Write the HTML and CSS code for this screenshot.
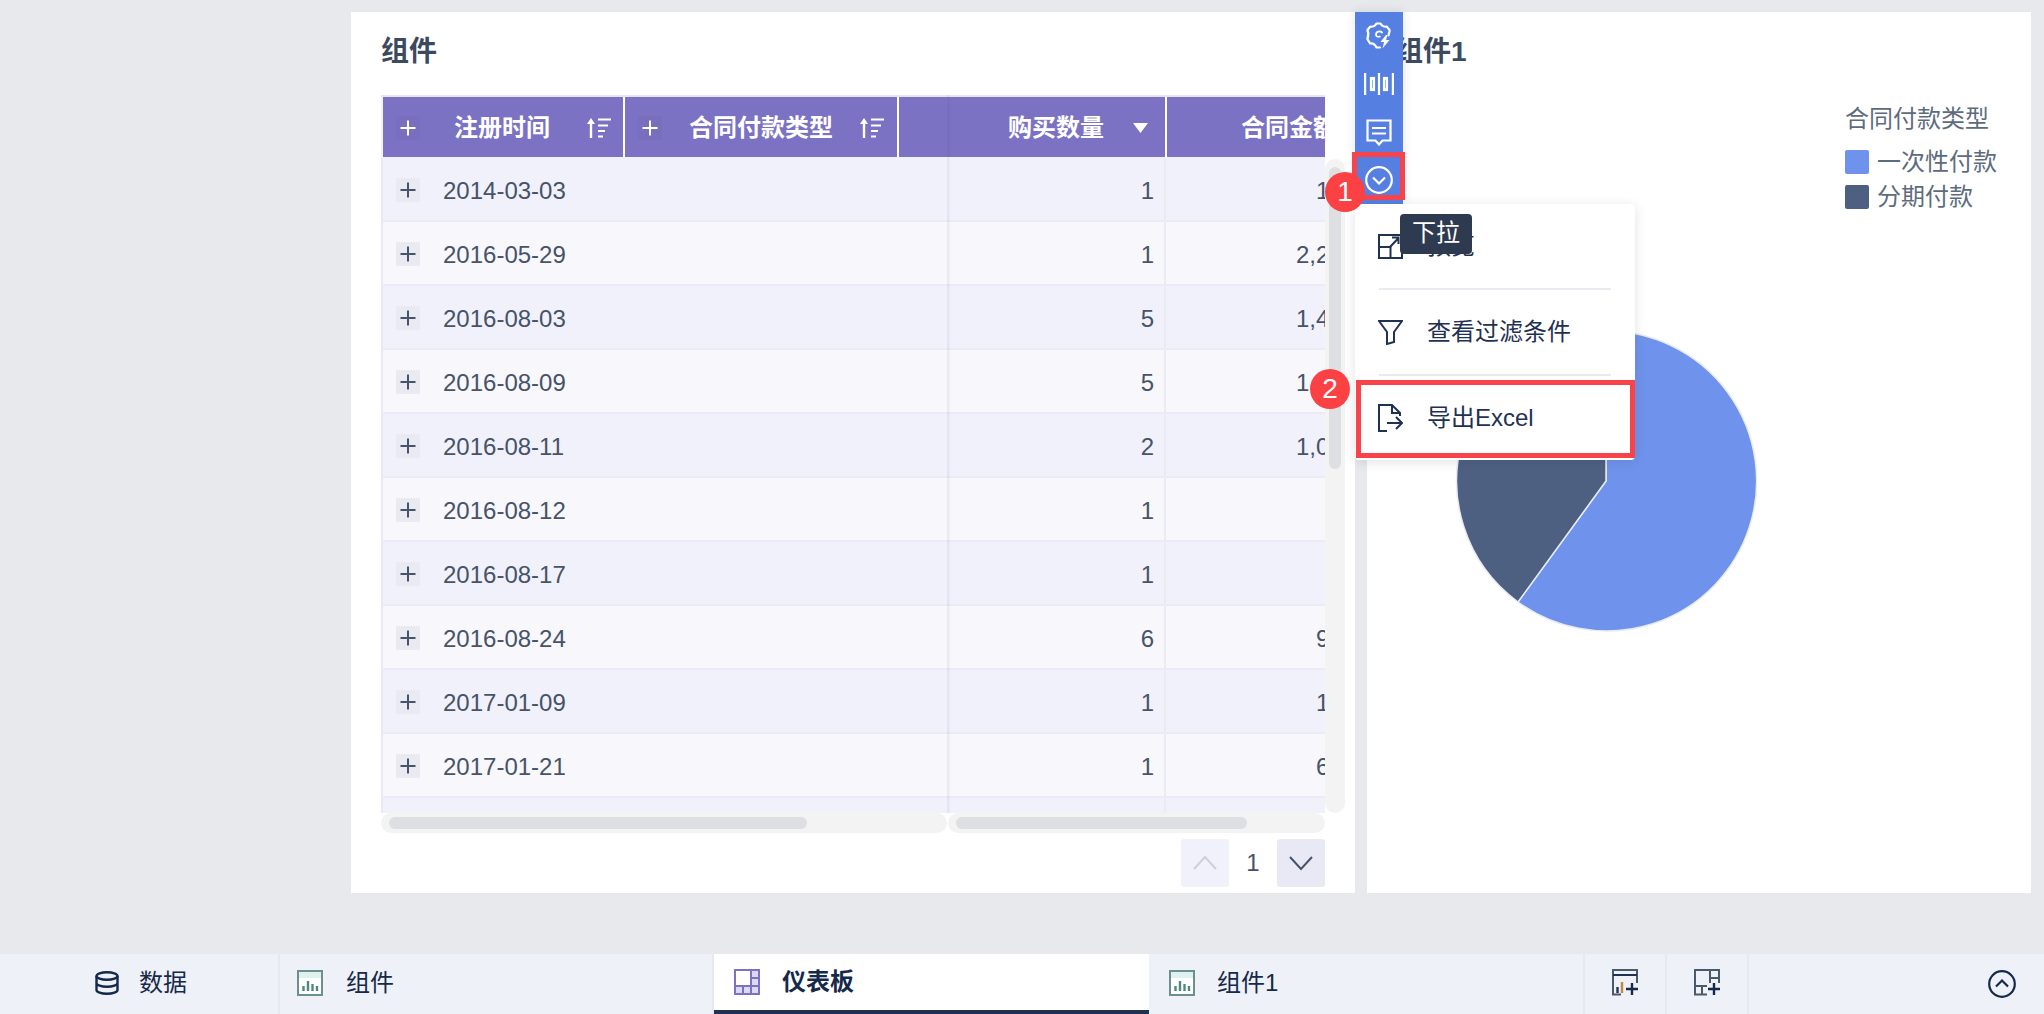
FILE: index.html
```html
<!DOCTYPE html>
<html lang="zh-CN">
<head>
<meta charset="utf-8">
<title>仪表板</title>
<link rel="stylesheet" href="styles.css">
</head>
<body>
<svg class="defs" width="0" height="0" aria-hidden="true">
  <symbol id="plus" viewBox="0 0 24 24"><path d="M12 4.500v15M4.500 12h15" fill="none" stroke="currentColor" stroke-width="2"/></symbol>
  <symbol id="sort" viewBox="0 0 25 20"><path d="M5 20V3" fill="none" stroke="#fff" stroke-width="2.400"/><path d="M5 0l4 6H1z" fill="#fff"/><path d="M12 1.500h13M12 7.500h10M12 13h7M12 18.500h5" fill="none" stroke="#fff" stroke-width="2"/></symbol>
  <symbol id="chart-tab" viewBox="0 0 26 26"><rect x="1" y="1" width="24" height="24" fill="#fff" stroke="#6c9090" stroke-width="2"/><rect x="2" y="2" width="22" height="6" fill="#dff1ee"/><path d="M6.500 21v-5M11 21V11M15.500 21v-7M20 21v-5" fill="none" stroke="#4c8a80" stroke-width="2.400"/></symbol>
</svg>

<main class="stage">
  <section class="card card-table">
    <h2 class="card-title">组件</h2>
    <div class="table-row-wrap">
      <div class="table">
        <div class="thead">
          <div class="th th-dim1"><span class="plus plus-head"><svg><use href="#plus"/></svg></span><span class="th-label">注册时间</span><svg class="sort"><use href="#sort"/></svg></div>
          <div class="th th-dim2"><span class="plus plus-head"><svg><use href="#plus"/></svg></span><span class="th-label">合同付款类型</span><svg class="sort"><use href="#sort"/></svg></div>
          <div class="th th-num3"><span>购买数量</span><svg class="tri" viewBox="0 0 15 10"><path d="M0 0h15L7.500 10z" fill="#fff"/></svg></div>
          <div class="th th-num4"><span>合同金额</span></div>
        </div>
        <div class="tr odd"><div class="td-dim"><span class="plus"><svg><use href="#plus"/></svg></span>2014-03-03</div><div class="td-num3">1</div><div class="td-num4">100</div></div>
        <div class="tr even"><div class="td-dim"><span class="plus"><svg><use href="#plus"/></svg></span>2016-05-29</div><div class="td-num3">1</div><div class="td-num4">2,200</div></div>
        <div class="tr odd"><div class="td-dim"><span class="plus"><svg><use href="#plus"/></svg></span>2016-08-03</div><div class="td-num3">5</div><div class="td-num4">1,400</div></div>
        <div class="tr even"><div class="td-dim"><span class="plus"><svg><use href="#plus"/></svg></span>2016-08-09</div><div class="td-num3">5</div><div class="td-num4">1,100</div></div>
        <div class="tr odd"><div class="td-dim"><span class="plus"><svg><use href="#plus"/></svg></span>2016-08-11</div><div class="td-num3">2</div><div class="td-num4">1,000</div></div>
        <div class="tr even"><div class="td-dim"><span class="plus"><svg><use href="#plus"/></svg></span>2016-08-12</div><div class="td-num3">1</div><div class="td-num4">90</div></div>
        <div class="tr odd"><div class="td-dim"><span class="plus"><svg><use href="#plus"/></svg></span>2016-08-17</div><div class="td-num3">1</div><div class="td-num4">90</div></div>
        <div class="tr even"><div class="td-dim"><span class="plus"><svg><use href="#plus"/></svg></span>2016-08-24</div><div class="td-num3">6</div><div class="td-num4">900</div></div>
        <div class="tr odd"><div class="td-dim"><span class="plus"><svg><use href="#plus"/></svg></span>2017-01-09</div><div class="td-num3">1</div><div class="td-num4">100</div></div>
        <div class="tr even"><div class="td-dim"><span class="plus"><svg><use href="#plus"/></svg></span>2017-01-21</div><div class="td-num3">1</div><div class="td-num4">600</div></div>
        <div class="tr odd"><div class="td-dim"></div><div class="td-num3"></div><div class="td-num4"></div></div>
        <div class="freeze-line"></div>
      </div>
      <div class="vscroll"><div class="vthumb"></div></div>
    </div>
    <div class="hscrolls">
      <div class="htrack htrack-left"><div class="hthumb hthumb-left"></div></div>
      <div class="htrack htrack-right"><div class="hthumb hthumb-right"></div></div>
    </div>
    <div class="pager">
      <button class="page-btn page-up"><svg viewBox="0 0 48 48" width="48" height="48"><path d="M13 30l11-12 11 12" fill="none" stroke="#cfd0d6" stroke-width="2"/></svg></button>
      <span class="page-num">1</span>
      <button class="page-btn page-down"><svg viewBox="0 0 48 48" width="48" height="48"><path d="M13 18l11 12 11-12" fill="none" stroke="#47536b" stroke-width="2"/></svg></button>
    </div>
  </section>

  <section class="card card-pie">
    <h2 class="card-title">组件1</h2>
    <div class="pie-body">
      <svg class="pie" viewBox="0 0 302 302" width="302" height="302">
        <path d="M151 151L151 1A150 150 0 1 1 63 272Z" fill="#6f93ec" stroke="#e8ebf2" stroke-width="1.500"/>
        <path d="M151 151L63 272A150 150 0 0 1 151 1Z" fill="#4e6082" stroke="#e8ebf2" stroke-width="1.500"/>
      </svg>
      <div class="legend">
        <div class="legend-title">合同付款类型</div>
        <div class="legend-item"><i class="swatch swatch-blue"></i>一次性付款</div>
        <div class="legend-item"><i class="swatch swatch-dark"></i>分期付款</div>
      </div>
    </div>
  </section>

  <div class="toolbar">
    <span class="tool"><svg width="28" height="28" viewBox="0 0 28 28" fill="none" stroke="#fff" stroke-width="2.200" stroke-linejoin="round" stroke-linecap="round"><path d="M23.600 13.500C23.400 12 25 10 24.600 8L21.600 4.600C20 5 17 4.500 15.500 1.500H11.500C10 4.500 7 5 5.400 4.600L2.400 8C3.500 10.500 3.500 14 2.400 17L5 21.400C7 21 10 22 11.500 25.500H15"/><path d="M17 10.500C15 8.500 11 9.500 11 12.500C11 14.500 13 15.200 14.800 14.500" stroke-width="1.800"/><path d="M21 13l-5.500 7h3.500l-1.500 6.500 7-8.500h-3.500l1.500-5z" fill="#fff" stroke="none"/></svg></span>
    <span class="tool"><svg width="30" height="22" viewBox="0 0 30 22" fill="none" stroke="#fff" stroke-width="2.200"><path d="M1.100 0v22M15 0v22M28.900 0v22"/><rect x="7" y="5" width="3" height="12" fill="#fff" fill-opacity=".3"/><rect x="20" y="5" width="3" height="12" fill="#fff" fill-opacity=".3"/></svg></span>
    <span class="tool"><svg width="26" height="27" viewBox="0 0 26 27" fill="none" stroke="#fff" stroke-width="2.200"><path d="M1.500 1.500h23v20h-8l-3.500 4-3.500-4h-8z"/><path d="M6 9h14M6 14.500h14"/></svg></span>
    <span class="tool"><svg width="28" height="28" viewBox="0 0 28 28" fill="none" stroke="#fff" stroke-width="2.200"><circle cx="14" cy="14" r="12.800"/><path d="M8 11.500l6 6 6-6"/></svg></span>
  </div>

  <div class="menu">
    <div class="menu-item"><svg class="menu-icon" width="25" height="25" viewBox="0 0 25 25" fill="none" stroke="#1f3254" stroke-width="2"><rect x="1" y="1" width="23" height="23"/><path d="M1 13h11.500v11"/><path d="M12 13l8.500-9M14 3.500h6.500V10"/></svg>预览</div>
    <div class="menu-sep"></div>
    <div class="menu-item"><svg class="menu-icon" width="25" height="25" viewBox="0 0 25 25" fill="none" stroke="#1f3254" stroke-width="2"><path d="M1 1h23l-8 11v10l-7 2V12z"/></svg>查看过滤条件</div>
    <div class="menu-sep"></div>
    <div class="menu-item"><svg class="menu-icon" width="25" height="28" viewBox="0 0 25 28" fill="none" stroke="#1f3254" stroke-width="2"><path d="M9 27H1V1h13l8 8v3M14 1v8h8"/><path d="M9 19h15M18 13l6 6-6 6"/></svg>导出Excel</div>
  </div>

  <div class="tooltip">下拉</div>
  <div class="hilite hilite-tool"></div>
  <div class="hilite hilite-export"></div>
  <div class="badge badge-one">1</div>
  <div class="badge badge-two">2</div>
</main>

<nav class="tabbar">
  <div class="tab tab-data"><svg width="24" height="24" viewBox="0 0 24 24" fill="none" stroke="#14294b" stroke-width="2.400"><ellipse cx="12" cy="5" rx="10.500" ry="3.800"/><path d="M1.500 5v14c0 2.100 4.700 3.800 10.500 3.800s10.500-1.700 10.500-3.800V5M1.500 12c0 2.100 4.700 3.800 10.500 3.800s10.500-1.700 10.500-3.800"/></svg>数据</div>
  <div class="tab tab-comp"><svg width="26" height="26"><use href="#chart-tab"/></svg>组件</div>
  <div class="tab tab-board"><svg width="26" height="26" viewBox="0 0 26 26"><rect x="1" y="1" width="24" height="24" fill="#dcd9f7" stroke="#7c72c4" stroke-width="2"/><rect x="2" y="2" width="15" height="15" fill="#fff"/><path d="M17 1v24M1 17h24M17 9h8M9 17v8" fill="none" stroke="#7c72c4" stroke-width="2"/></svg>仪表板</div>
  <div class="tab tab-comp1"><svg width="26" height="26"><use href="#chart-tab"/></svg>组件1</div>
  <div class="tab-action tab-add1"><svg width="27" height="27" viewBox="0 0 27 27" fill="none" stroke-width="2"><path d="M9 25.500H1V1h24v13" stroke="#4a5a6a"/><path d="M1 6h24" stroke="#1f3254"/><path d="M5.500 24v-6" stroke="#1f3254" stroke-width="2.400"/><path d="M10 24V13" stroke="#c08a3c" stroke-width="2.400"/><path d="M14 20h12M20 14v12" stroke="#14294b" stroke-width="2.400"/></svg></div>
  <div class="tab-action tab-add2"><svg width="27" height="27" viewBox="0 0 27 27" fill="none" stroke="#4a5a6a" stroke-width="2"><path d="M13 25.500H1V1h24v13"/><path d="M16 1v13M16 9h9M1 17h12M8 17v8"/><path d="M14 20h12M20 14v12" stroke="#14294b" stroke-width="2.400"/></svg></div>
  <div class="tab-fill"><svg width="28" height="28" viewBox="0 0 28 28" fill="none" stroke="#14294b" stroke-width="2.200"><circle cx="14" cy="14" r="12.800"/><path d="M8 16.500l6-6 6 6"/></svg></div>
</nav>
</body>
</html>
```

FILE: styles.css
```css
* { box-sizing: border-box; }
html, body { margin: 0; padding: 0; }
body {
  width: 2044px;
  height: 1014px;
  overflow: hidden;
  background: #e8e9ed;
  display: flex;
  flex-direction: column;
  font: 24px/32px "Liberation Sans", "Noto Sans CJK SC", sans-serif;
  color: #465368;
}
.defs { position: absolute; }

.stage {
  position: relative;
  height: 954px;
  padding: 12px 13px 61px 351px;
  display: flex;
  gap: 12px;
}
.card { background: #fff; height: 881px; }
.card-table { width: 1004px; padding: 20px 10px 0 30px; }
.card-pie { width: 664px; padding: 20px 0 0 28px; }
.card-title {
  margin: 0;
  height: 40px;
  font-size: 28px;
  line-height: 40px;
  font-weight: 700;
  color: #3c4a60;
}

/* table */
.table-row-wrap { display: flex; margin-top: 23px; }
.table {
  position: relative;
  width: 944px;
  height: 718px;
  overflow: hidden;
  background: #f0f1fa;
}
.thead {
  display: flex;
  height: 63px;
  padding: 2px 0 1px 2px;
  background: linear-gradient(#e6e5f3 2px, #f0f1fa 2px);
}
.th {
  flex: none;
  height: 60px;
  padding-top: 2px;
  display: flex;
  align-items: center;
  background: #7c72c4;
  color: #fff;
  font-weight: 700;
  border-right: 2px solid #fff;
}
.th-dim1 { width: 242px; padding-left: 13px; }
.th-dim2 { width: 274px; padding-left: 13px; }
.th-num3 { width: 268px; padding-left: 109px; }
.th-num4 { width: 210px; padding-left: 74px; border-right: 0; white-space: nowrap; }
.th-label { margin-left: 34px; }
.th-dim2 .th-label { margin-left: 27px; }
.th-dim1 .sort { margin-left: 36px; }
.th-dim2 .sort { margin-left: 26px; }
.sort { width: 25px; height: 20px; }
.tri { width: 15px; height: 10px; margin-left: 29px; }

.plus {
  flex: none;
  display: inline-flex;
  width: 24px;
  height: 24px;
  margin: 0 23px 2px 0;
  background: #e9eaf2;
  color: #465368;
}
.plus svg { width: 24px; height: 24px; }
.plus-head { margin: 0; background: #7870bf; color: #fff; }

.tr {
  display: flex;
  height: 64px;
  width: 1000px;
  border-left: 2px solid #e9e9f6;
  border-bottom: 2px solid #ebebf6;
}
.odd { background: #f0f1fa; }
.even { background: #f7f7fc; }
.td-dim {
  width: 564px;
  display: flex;
  align-items: center;
  padding: 4px 0 0 13px;
}
.td-num3 {
  width: 219px;
  padding-right: 10px;
  text-align: right;
  line-height: 66px;
  border-right: 2px solid #ebebf6;
}
.td-num4 {
  width: 203px;
  padding-right: 13px;
  text-align: right;
  line-height: 66px;
}
.freeze-line {
  position: absolute;
  left: 566px;
  top: 0;
  bottom: 0;
  width: 2px;
  background: rgba(70, 70, 110, .07);
  box-shadow: 1px 0 2px rgba(70, 70, 110, .05);
}

.vscroll {
  width: 20px;
  height: 654px;
  margin-top: 64px;
  padding: 8px 4px 0;
  background: #f3f3f4;
  border-radius: 10px;
}
.vthumb { width: 12px; height: 302px; background: #dedfe2; border-radius: 6px; }

.hscrolls { display: flex; gap: 1px; width: 944px; }
.htrack {
  height: 20px;
  padding: 4px 8px;
  background: #f3f3f4;
  border-radius: 10px;
}
.htrack-left { width: 566px; }
.htrack-right { width: 377px; }
.hthumb { height: 12px; background: #dedfe2; border-radius: 6px; }
.hthumb-left { width: 418px; }
.hthumb-right { width: 291px; }

.pager {
  display: flex;
  justify-content: flex-end;
  align-items: center;
  width: 944px;
  margin-top: 6px;
}
.page-btn {
  width: 48px;
  height: 48px;
  padding: 0;
  border: 0;
  border-radius: 3px;
  display: block;
}
.page-btn svg { display: block; }
.page-up { background: #f0f1fa; }
.page-down { background: #e9e9f6; }
.page-num { width: 48px; text-align: center; }

/* pie */
.pie-body { display: flex; align-items: flex-start; margin-top: 33px; }
.pie { flex: none; margin: 225px 0 0 60px; }
.legend { margin-left: 88px; color: #5d6b80; }
.legend-title { height: 28px; padding-top: 2px; line-height: 24px; margin-bottom: 11px; }
.legend-item { display: flex; align-items: center; height: 35px; color: #5d6b80; }
.swatch { width: 24px; height: 24px; margin-right: 8px; border-radius: 2px; }
.swatch-blue { background: #6f93ec; }
.swatch-dark { background: #4e6082; }

/* overlays */
.toolbar {
  position: absolute;
  left: 1355px;
  top: 12px;
  width: 48px;
  height: 192px;
  background: #5580e2;
  box-shadow: 0 0 10px rgba(40, 50, 80, .12);
  display: flex;
  flex-direction: column;
}
.tool {
  height: 48px;
  display: flex;
  align-items: center;
  justify-content: center;
}
.menu {
  position: absolute;
  left: 1355px;
  top: 204px;
  width: 280px;
  height: 256px;
  background: #fff;
  border-radius: 4px;
  box-shadow: 0 2px 12px rgba(40, 50, 80, .14);
  color: #1f3254;
}
.menu-item {
  height: 84px;
  padding-left: 23px;
  display: flex;
  align-items: center;
  gap: 24px;
}
.menu-sep { height: 2px; margin: 0 24px; background: #e8eaf0; }
.menu-icon { flex: none; }

.tooltip {
  position: absolute;
  left: 1400px;
  top: 214px;
  width: 72px;
  height: 40px;
  line-height: 38px;
  text-align: center;
  color: #fff;
  background: #2e3a50;
  border-radius: 4px;
}
.hilite { position: absolute; border: 5px solid #f9434a; }
.hilite-tool { left: 1352px; top: 152px; width: 53px; height: 48px; }
.hilite-export { left: 1356px; top: 380px; width: 279px; height: 78px; }
.badge {
  position: absolute;
  width: 40px;
  height: 40px;
  border-radius: 50%;
  background: #fb4143;
  color: #fff;
  font: 28px/40px "Liberation Sans", sans-serif;
  text-align: center;
}
.badge-one { left: 1325px; top: 172px; }
.badge-two { left: 1310px; top: 369px; }

/* bottom tabs */
.tabbar {
  height: 60px;
  display: flex;
  background: #eef1f7;
  color: #15294a;
}
.tab {
  display: flex;
  align-items: center;
  gap: 24px;
  padding-bottom: 2px;
  border-right: 2px solid #e6e9f0;
}
.tab-data { width: 280px; padding-left: 95px; gap: 20px; }
.tab-comp { width: 434px; padding-left: 17px; gap: 23px; }
.tab-board {
  width: 435px;
  padding-left: 20px;
  gap: 22px;
  background: #fff;
  font-weight: 700;
  border-right: 0;
  border-bottom: 4px solid #1f3254;
  padding-bottom: 0;
}
.tab-comp1 { width: 436px; padding-left: 20px; gap: 22px; }
.tab-action {
  width: 82px;
  display: flex;
  align-items: center;
  justify-content: center;
  padding-bottom: 4px;
  border-right: 2px solid #e6e9f0;
}
.tab-fill {
  flex: 1;
  display: flex;
  align-items: center;
  justify-content: flex-end;
  padding-right: 28px;
}
```
